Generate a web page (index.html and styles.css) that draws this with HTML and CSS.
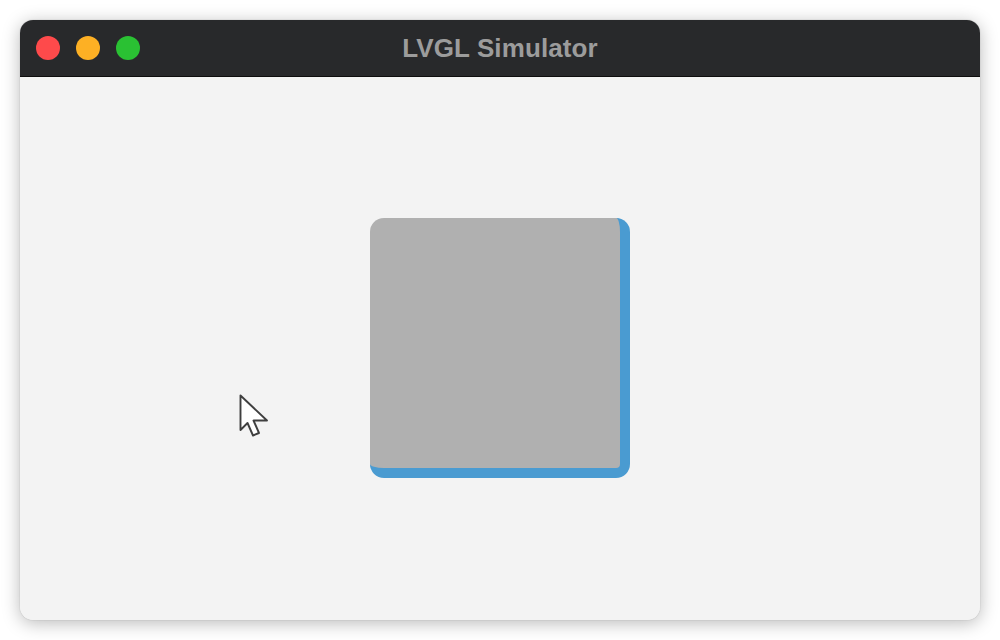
FILE: index.html
```html
<!DOCTYPE html>
<html>
<head>
<meta charset="utf-8">
<link rel="stylesheet" href="styles.css">
</head>
<body>
<div class="window">
  <div class="titlebar">
    <div class="lights">
      <span class="light red"></span>
      <span class="light yellow"></span>
      <span class="light green"></span>
    </div>
    <div class="title">LVGL Simulator</div>
  </div>
  <div class="content">
    <div class="box"></div>
    <svg class="cursor" width="32" height="46" viewBox="0 0 32 46">
      <path d="M1.5 1.5 L1.5 36 L8.5 29 L14 41.5 L20 39 L14.5 26.5 L28 26.5 Z" fill="#fff" stroke="#3f3f3f" stroke-width="1.9" stroke-linejoin="round"/>
    </svg>
  </div>
</div>
</body>
</html>
```

FILE: styles.css
```css
html, body {
  margin: 0;
  padding: 0;
  background: #ffffff;
  width: 1000px;
  height: 640px;
  overflow: hidden;
}

.window {
  margin: 20px;
  width: 960px;
  height: 600px;
  border-radius: 13px;
  overflow: hidden;
  display: flex;
  flex-direction: column;
  box-shadow: 0 3px 18px rgba(0, 0, 0, 0.28), 0 0 1px rgba(0, 0, 0, 0.35);
  background: #f3f3f3;
}

.titlebar {
  position: relative;
  height: 56px;
  background: #28292b;
  border-bottom: 1px solid #0e0e0e;
  display: flex;
  align-items: center;
  justify-content: center;
  flex-shrink: 0;
}

.lights {
  position: absolute;
  left: 16px;
  top: 16px;
  display: flex;
  gap: 16px;
}

.light {
  width: 24px;
  height: 24px;
  border-radius: 50%;
  display: block;
}

.red { background: #fe4a4b; }
.yellow { background: #fdb024; }
.green { background: #2ac133; }

.title {
  font-family: "Liberation Sans", Arial, sans-serif;
  font-weight: bold;
  font-size: 26px;
  letter-spacing: 0.1px;
  color: #9c9c9c;
}

.content {
  position: relative;
  flex: 1;
  display: flex;
  align-items: center;
  justify-content: center;
  background: #f3f3f3;
}

.box {
  width: 250px;
  height: 250px;
  margin-bottom: 2px;
  background: #b0b0b0;
  border-right: 10px solid #4a9bd1;
  border-bottom: 10px solid #4a9bd1;
  border-radius: 14px;
}

.cursor {
  position: absolute;
  left: 219px;
  top: 317px;
}
```
